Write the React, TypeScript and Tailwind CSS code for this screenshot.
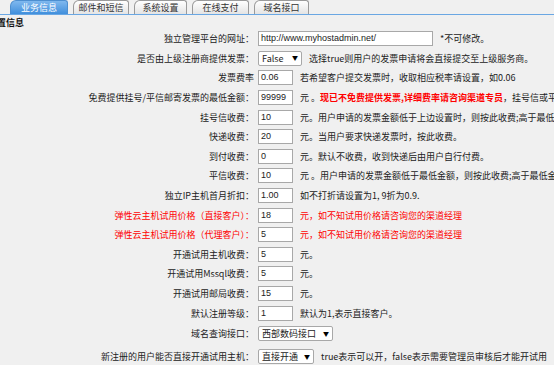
import React from "react";

type Row = {
  label: string;
  red?: boolean;
  control: React.ReactNode;
  desc?: React.ReactNode;
  h?: string;
};

const Input = ({ value, w = "w-[35px]" }: { value: string; w?: string }) => (
  <div
    className={`${w} h-[15px] shrink-0 bg-white border border-[#a8a8a8] flex items-center pl-[2px] text-[9px] leading-none text-[#222] font-['Liberation_Sans',Arial,sans-serif] whitespace-nowrap overflow-hidden`}
  >
    {value}
  </div>
);

const Select = ({ value, w }: { value: string; w: string }) => (
  <div
    className={`${w} h-[15px] shrink-0 bg-white border border-[#a8a8a8] rounded-[2px] flex items-center justify-between pl-[3px] pr-[3px] text-[9px] leading-none text-[#222] whitespace-nowrap`}
  >
    <span>{value}</span>
    <span className="text-[6px] text-black">▼</span>
  </div>
);

const Red = ({ children, bold }: { children: React.ReactNode; bold?: boolean }) => (
  <span className={`text-[#ff0000] ${bold ? "font-bold" : ""}`}>{children}</span>
);

const rows: Row[] = [
  {
    label: "独立管理平台的网址：",
    control: <Input value="http://www.myhostadmin.net/" w="w-[175px]" />,
    desc: "*不可修改。",
  },
  {
    label: "是否由上级注册商提供发票：",
    control: <Select value="False" w="w-[44px]" />,
    desc: "选择true则用户的发票申请将会直接提交至上级服务商。",
  },
  {
    label: "发票费率",
    control: <Input value="0.06" />,
    desc: "若希望客户提交发票时，收取相应税率请设置，如0.06",
  },
  {
    label: "免费提供挂号/平信邮寄发票的最低金额：",
    control: <Input value="99999" />,
    desc: (
      <>
        元 。<Red bold>现已不免费提供发票,详细费率请咨询渠道专员</Red>，挂号信或平信邮寄发票
      </>
    ),
  },
  {
    label: "挂号信收费：",
    control: <Input value="10" />,
    desc: "元。用户申请的发票金额低于上边设置时，则按此收费;高于最低金额免费",
  },
  {
    label: "快递收费：",
    control: <Input value="20" />,
    desc: "元。当用户要求快递发票时，按此收费。",
  },
  {
    label: "到付收费：",
    control: <Input value="0" />,
    desc: "元。默认不收费，收到快递后由用户自行付费。",
  },
  {
    label: "平信收费：",
    control: <Input value="10" />,
    desc: "元 。用户申请的发票金额低于最低金额，则按此收费;高于最低金额免费",
  },
  {
    label: "独立IP主机首月折扣：",
    control: <Input value="1.00" />,
    desc: "如不打折请设置为1, 9折为0.9.",
  },
  {
    label: "弹性云主机试用价格（直接客户）：",
    red: true,
    control: <Input value="18" />,
    desc: <Red>元，如不知试用价格请咨询您的渠道经理</Red>,
  },
  {
    label: "弹性云主机试用价格（代理客户）：",
    red: true,
    control: <Input value="5" />,
    desc: <Red>元，如不知试用价格请咨询您的渠道经理</Red>,
  },
  { label: "开通试用主机收费：", control: <Input value="5" />, desc: "元。" },
  { label: "开通试用Mssql收费：", control: <Input value="5" />, desc: "元。" },
  { label: "开通试用邮局收费：", control: <Input value="15" />, desc: "元。" },
  {
    label: "默认注册等级：",
    control: <Input value="1" />,
    desc: "默认为1,表示直接客户。",
  },
  {
    label: "域名查询接口：",
    control: <Select value="西部数码接口" w="w-[75px]" />,
    h: "h-[22px]",
  },
  {
    label: "新注册的用户能否直接开通试用主机：",
    control: <Select value="直接开通" w="w-[56px]" />,
    desc: "true表示可以开，false表示需要管理员审核后才能开试用",
    h: "h-[24px]",
  },
];

const tabs = [
  { name: "业务信息", w: "w-[58px]", active: true },
  { name: "邮件和短信", w: "w-[56px]" },
  { name: "系统设置", w: "w-[53px]" },
  { name: "在线支付", w: "w-[57px]" },
  { name: "域名接口", w: "w-[55px]" },
];

export default function App() {
  return (
    <div className="w-[554px] h-[365px] overflow-hidden bg-[#f0f0f0] text-[9px] leading-none text-[#222] font-['Noto_Sans_CJK_SC','Noto_Sans',sans-serif]">
      {/* tab bar */}
      <div className="h-[15px] flex items-end gap-[5px] pl-[10px] border-b border-[#6aa7e3]">
        {tabs.map((t) => (
          <div
            key={t.name}
            className={`${t.w} h-[14px] rounded-tl-[6px] rounded-tr-[3px] border border-b-0 flex items-center justify-center ${
              t.active
                ? "bg-gradient-to-b from-[#7fb8ee] to-[#3f8fdc] border-[#4d8fd0] text-white"
                : "bg-gradient-to-b from-[#ffffff] to-[#e4e4e4] border-[#9a9a9a] text-[#333]"
            }`}
          >
            {t.name}
          </div>
        ))}
      </div>
      {/* heading */}
      <div className="h-[14px] flex items-center font-bold text-[#111] -ml-[3px]">置信息</div>
      {/* rows */}
      <div className="flex flex-col">
        {rows.map((r, i) => (
          <div key={i} className={`${r.h ?? "h-[19.6px]"} flex items-center whitespace-nowrap`}>
            <div className={`w-[254px] shrink-0 text-right ${r.red ? "text-[#ff0000]" : "text-[#222]"}`}>
              {r.label}
            </div>
            <div className="ml-[4px] flex items-center">{r.control}</div>
            {r.desc && <div className="ml-[7px] text-[#222]">{r.desc}</div>}
          </div>
        ))}
      </div>
    </div>
  );
}
